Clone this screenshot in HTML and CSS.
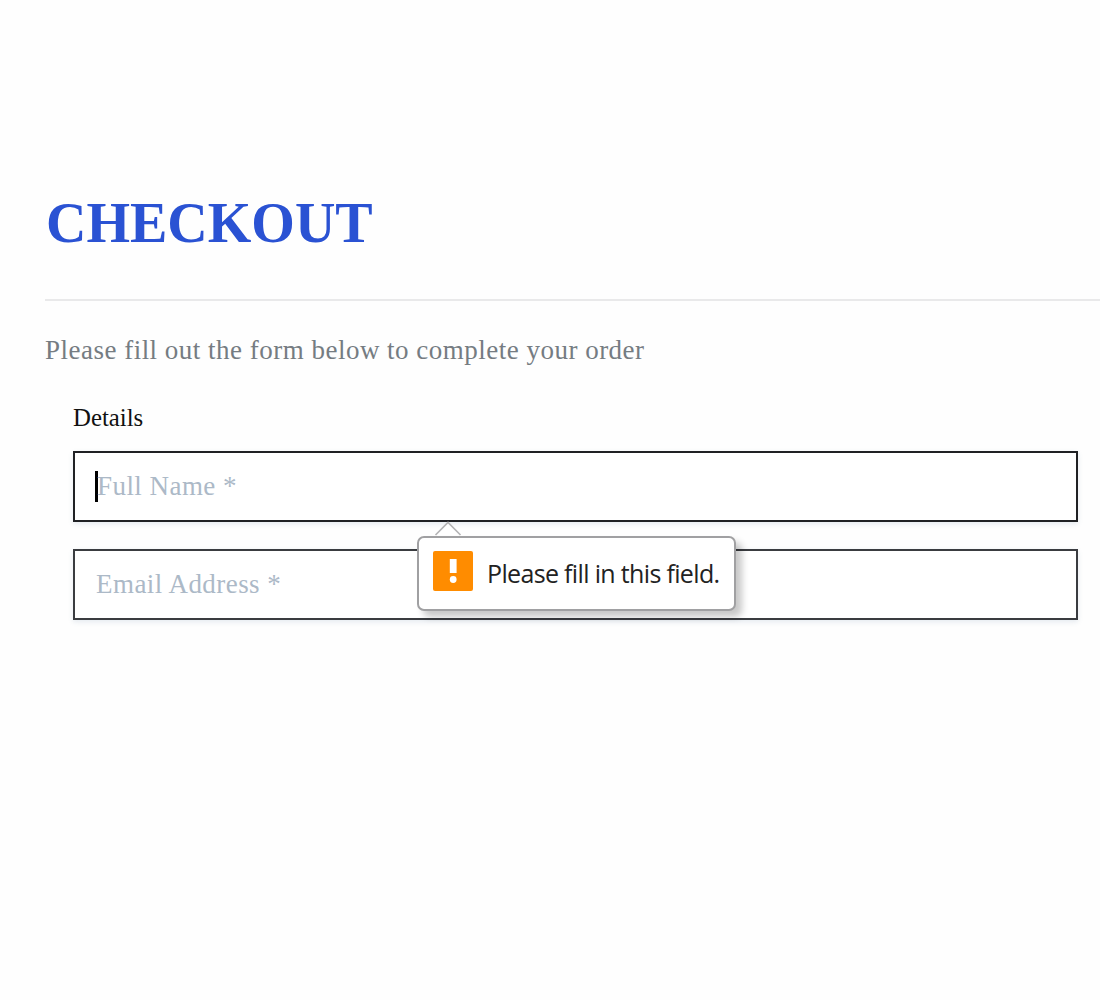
FILE: index.html
```html
<!DOCTYPE html>
<html lang="en">
<head>
<meta charset="utf-8">
<title>Checkout</title>
<link rel="stylesheet" href="styles.css">
</head>
<body>
<main class="checkout">
  <h1 class="title">CHECKOUT</h1>
  <p class="intro">Please fill out the form below to complete your order</p>
  <form class="form">
    <div class="legend">Details</div>
    <div class="field focused">
      <span class="caret"></span><span class="placeholder">Full Name *</span>
      <div class="tooltip" role="alert">
        <svg class="arrow" width="28" height="15" viewBox="0 0 28 15"><path d="M1.5 14 14 1.5 26.5 14" fill="#fff" stroke="#b3b3b5" stroke-width="1.6"/></svg>
        <svg class="warning" width="40" height="40" viewBox="0 0 40 40"><rect width="40" height="40" rx="2" fill="#ff8c00"/><path d="M16.8 8h6.8v14h-6.8z" fill="#fff"/><circle cx="20.2" cy="28.5" r="3.4" fill="#fff"/></svg>
        <span class="message">Please fill in this field.</span>
      </div>
    </div>
    <div class="field"><span class="placeholder">Email Address *</span></div>
  </form>
</main>
</body>
</html>
```
FILE: styles.css
```css
* {
  box-sizing: border-box;
}

body {
  margin: 0;
  background: #fefefe;
  font-family: "Liberation Serif", "Times New Roman", serif;
  overflow: hidden;
}

.checkout {
  padding: 191px 0 0 45px;
}

.title {
  margin: 0;
  height: 110px;
  padding-left: 1px;
  border-bottom: 2px solid #e9e9ea;
  color: #2a52d3;
  font-size: 56px;
  line-height: 64px;
}

.intro {
  margin: 33px 0 0;
  color: #757c82;
  font-size: 27px;
  line-height: 32px;
  letter-spacing: 0.49px;
}

.form {
  padding: 37px 22px 0 28px;
}

.legend {
  color: #111;
  font-size: 24.8px;
  line-height: 30px;
  margin-bottom: 18px;
}

.field {
  position: relative;
  display: flex;
  align-items: center;
  height: 71px;
  margin-bottom: 27px;
  padding: 0 21px;
  border: 2px solid #3a3c40;
  background: #fff;
  box-shadow: 0 2px 5px rgba(80, 110, 150, 0.14);
}

.focused {
  padding-left: 20px;
  border-color: #202124;
  z-index: 1;
}

.placeholder {
  padding-bottom: 2px;
  color: #acb9c7;
  font-size: 27px;
  line-height: 32px;
  letter-spacing: 0.45px;
}

.caret {
  width: 3px;
  height: 31px;
  margin-right: -1px;
  background: #000;
}

.tooltip {
  position: absolute;
  left: 342px;
  top: 83px;
  display: flex;
  align-items: center;
  gap: 14px;
  width: 319px;
  height: 75px;
  padding: 0 14px 5px;
  border: 2px solid #a0a0a2;
  border-radius: 7px;
  background: #fff;
  box-shadow: 6px 6px 7px rgba(0, 0, 0, 0.22);
}

.arrow {
  position: absolute;
  left: 15px;
  top: -17px;
}

.warning {
  flex: none;
}

.message {
  padding-top: 4px;
  color: #222;
  font-family: "Open Sans", "Noto Sans", sans-serif;
  font-size: 25px;
  line-height: 34px;
  letter-spacing: -0.66px;
  white-space: nowrap;
}
```
